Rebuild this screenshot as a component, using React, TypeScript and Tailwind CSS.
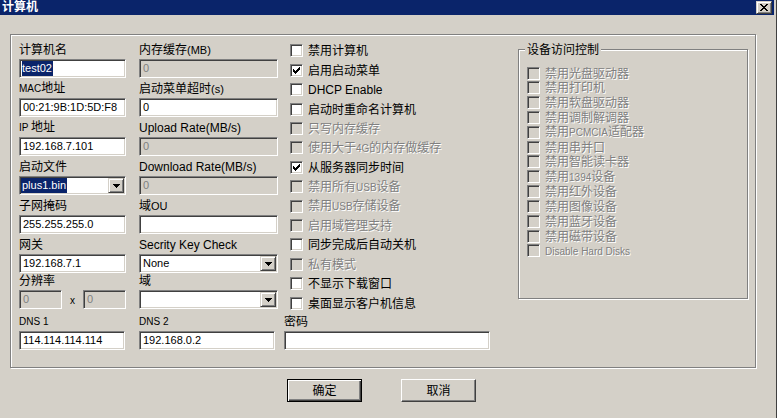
import React from 'react';

// split text so CJK glyphs get 12px and latin gets its own (smaller) font, like the old dialog fonts
const isCjk = (ch: string) => /[\u3000-\u9fff\uff00-\uffef]/.test(ch);

const TAHOMA = 'text-[12px]';
const SMALL = 'text-[10px]';

function T({ text, latin = 'text-[11px]' }: { text: string; latin?: string }) {
  const runs: { cjk: boolean; s: string }[] = [];
  for (const ch of text) {
    const c = isCjk(ch);
    const last = runs[runs.length - 1];
    if (last && last.cjk === c) last.s += ch;
    else runs.push({ cjk: c, s: ch });
  }
  return (
    <>
      {runs.map((r, i) => (
        <span key={i} className={r.cjk ? 'text-[12px]' : latin}>
          {r.s}
        </span>
      ))}
    </>
  );
}

const sunken =
  'border border-t-[#808080] border-l-[#808080] border-b-white border-r-white shadow-[inset_1px_1px_0_#404040,inset_-1px_-1px_0_#d4d0c8]';
const raised =
  'border border-t-[#d4d0c8] border-l-[#d4d0c8] border-b-[#404040] border-r-[#404040] shadow-[inset_1px_1px_0_#fff,inset_-1px_-1px_0_#808080] bg-[#d4d0c8]';
const etched = 'border border-[#808080] shadow-[inset_1px_1px_0_#fff,1px_1px_0_#fff]';
const grayText = 'text-[#808080] [text-shadow:1px_1px_0_#fff]';

function Label({ text, h, latin }: { text: string; h: string; latin?: string }) {
  return (
    <div className={`${h} flex items-end pb-[2px]`}>
      <div className="leading-[14px] whitespace-nowrap text-black">
        <T text={text} latin={latin} />
      </div>
    </div>
  );
}

function Field({
  value = '',
  disabled,
  selected,
  w,
}: {
  value?: string;
  disabled?: boolean;
  selected?: boolean;
  w: string;
}) {
  return (
    <div
      className={`${w} h-[19px] ${sunken} ${disabled ? 'bg-[#d4d0c8] text-[#808080]' : 'bg-white text-black'} flex items-center pl-[2px] overflow-hidden`}
    >
      {selected ? (
        <span className="bg-[#0a246a] text-white text-[11px] leading-[15px] pr-[1px]">{value}</span>
      ) : (
        <span className="text-[11px] leading-[15px] pl-[1px]">{value}</span>
      )}
    </div>
  );
}

function Arrow() {
  return (
    <svg width="7" height="4" viewBox="0 0 7 4" shapeRendering="crispEdges">
      <path d="M0 0h7v1h-1v1h-1v1h-1v1h-1v-1h-1v-1h-1v-1h-1z" fill="#000" />
    </svg>
  );
}

function Combo({ value = '', selected, w }: { value?: string; selected?: boolean; w: string }) {
  return (
    <div className={`${w} h-[19px] ${sunken} bg-white flex items-stretch py-[1px] pr-[1px]`}>
      <div className="flex-1 flex items-center pl-[1px] overflow-hidden">
        {selected ? (
          <span className="bg-[#0a246a] text-white text-[11px] leading-[15px] pl-[1px] pr-[1px]">{value}</span>
        ) : (
          <span className="text-[11px] leading-[15px] pl-[2px] text-black">{value}</span>
        )}
      </div>
      <div className={`w-[16px] ${raised} flex items-center justify-center`}>
        <Arrow />
      </div>
    </div>
  );
}

function Check({ checked, disabled }: { checked?: boolean; disabled?: boolean }) {
  return (
    <div
      className={`w-[13px] h-[13px] shrink-0 ${sunken} ${disabled ? 'bg-[#d4d0c8]' : 'bg-white'} flex items-center justify-center`}
    >
      {checked && (
        <svg width="7" height="7" viewBox="0 0 7 7" shapeRendering="crispEdges">
          <path
            d="M0 2h1v1h1v1h1v-1h1v-1h1v-1h1v-1h1v3h-1v1h-1v1h-1v1h-1v1h-1v-1h-1v-1h-1v-1h-1z"
            fill="#000"
          />
        </svg>
      )}
    </div>
  );
}

function CheckRow({
  text,
  checked,
  disabled,
  h,
  latin,
}: {
  text: string;
  checked?: boolean;
  disabled?: boolean;
  h: string;
  latin?: string;
}) {
  return (
    <div className={`${h} flex items-center gap-[5px]`}>
      <Check checked={checked} disabled={disabled} />
      <div className={`leading-[14px] whitespace-nowrap ${disabled ? grayText : 'text-black'}`}>
        <T text={text} latin={latin} />
      </div>
    </div>
  );
}

const options: { text: string; checked?: boolean; disabled?: boolean; latin?: string }[] = [
  { text: '禁用计算机' },
  { text: '启用启动菜单', checked: true },
  { text: 'DHCP Enable', latin: TAHOMA },
  { text: '启动时重命名计算机' },
  { text: '只写内存缓存', disabled: true },
  { text: '使用大于4G的内存做缓存', disabled: true, latin: SMALL },
  { text: '从服务器同步时间', checked: true },
  { text: '禁用所有USB设备', disabled: true, latin: SMALL },
  { text: '禁用USB存储设备', disabled: true, latin: SMALL },
  { text: '启用域管理支持', disabled: true },
  { text: '同步完成后自动关机' },
  { text: '私有模式', disabled: true },
  { text: '不显示下载窗口' },
  { text: '桌面显示客户机信息' },
];

const devices = [
  '禁用光盘驱动器',
  '禁用打印机',
  '禁用软盘驱动器',
  '禁用调制解调器',
  '禁用PCMCIA适配器',
  '禁用串并口',
  '禁用智能读卡器',
  '禁用1394设备',
  '禁用红外设备',
  '禁用图像设备',
  '禁用蓝牙设备',
  '禁用磁带设备',
  'Disable Hard Disks',
];

export default function App() {
  return (
    <div className="w-[777px] h-[418px] overflow-hidden bg-[#d4d0c8] border-r border-r-[#404040] font-['Liberation_Sans','Noto_Sans_CJK_SC',sans-serif] text-black">
      {/* Title bar */}
      <div className="w-[774px] h-[15px] bg-[#0a246a] flex items-center justify-between pl-[2px] pr-[2px]">
        <span className="text-white font-bold text-[12px] leading-[13px]">计算机</span>
        <div className={`w-[16px] h-[13px] ${raised} flex items-center justify-center`}>
          <svg width="8" height="7" viewBox="0 0 8 7" shapeRendering="crispEdges">
            <path
              d="M0 0h2v1h1v1h2v-1h1v-1h2v1h-1v1h-1v1h-1v1h1v1h1v1h1v1h-2v-1h-1v-1h-2v1h-1v1h-2v-1h1v-1h1v-1h1v-1h-1v-1h-1v-1h-1z"
              fill="#000"
            />
          </svg>
        </div>
      </div>

      {/* Main group */}
      <div className={`ml-[10px] mt-[19px] w-[746px] h-[334px] ${etched} flex items-start pl-[8px] pt-[4px]`}>
        {/* Column 1 */}
        <div className="w-[107px] flex flex-col">
          <Label text="计算机名" h="h-[20px]" />
          <Field value="test02" selected w="w-[107px]" />
          <Label text="MAC地址" h="h-[20px]" latin={SMALL} />
          <Field value="00:21:9B:1D:5D:F8" w="w-[107px]" />
          <Label text="IP 地址" h="h-[20px]" latin={SMALL} />
          <Field value="192.168.7.101" w="w-[107px]" />
          <Label text="启动文件" h="h-[20px]" />
          <Combo value="plus1.bin" selected w="w-[107px]" />
          <Label text="子网掩码" h="h-[20px]" />
          <Field value="255.255.255.0" w="w-[107px]" />
          <Label text="网关" h="h-[20px]" />
          <Field value="192.168.7.1" w="w-[107px]" />
          <Label text="分辨率" h="h-[17px]" />
          <div className="flex items-center">
            <Field value="0" disabled w="w-[43px]" />
            <span className="w-[21px] text-center text-[10px] leading-[14px] pt-[2px]">x</span>
            <Field value="0" disabled w="w-[43px]" />
          </div>
          <Label text="DNS 1" h="h-[22px]" latin={SMALL} />
          <Field value="114.114.114.114" w="w-[106px]" />
        </div>

        {/* Column 2 */}
        <div className="w-[139px] ml-[13px] flex flex-col">
          <Label text="内存缓存(MB)" h="h-[20px]" />
          <Field value="0" disabled w="w-[139px]" />
          <Label text="启动菜单超时(s)" h="h-[20px]" />
          <Field value="0" w="w-[139px]" />
          <Label text="Upload Rate(MB/s)" h="h-[20px]" latin={TAHOMA} />
          <Field value="0" disabled w="w-[139px]" />
          <Label text="Download Rate(MB/s)" h="h-[20px]" latin={TAHOMA} />
          <Field value="0" disabled w="w-[139px]" />
          <Label text="域OU" h="h-[20px]" />
          <Field w="w-[139px]" />
          <Label text="Secrity Key Check" h="h-[20px]" latin={TAHOMA} />
          <Combo value="None" w="w-[139px]" />
          <Label text="域" h="h-[17px]" />
          <Combo w="w-[139px]" />
          <Label text="DNS 2" h="h-[22px]" latin={SMALL} />
          <Field value="192.168.0.2" w="w-[136px]" />
        </div>

        {/* Column 3 */}
        <div className="w-[206px] ml-[6px] mt-[2.3px] flex flex-col">
          <div className="pl-[6px] flex flex-col">
            {options.map((o) => (
              <CheckRow
                key={o.text}
                text={o.text}
                checked={o.checked}
                disabled={o.disabled}
                latin={o.latin}
                h="h-[19.4px]"
              />
            ))}
          </div>
          <Label text="密码" h="h-[18.1px]" />
          <Field w="w-[206px]" />
        </div>

        {/* Device access group */}
        <div className={`relative ml-[28px] mt-[10px] w-[230px] h-[250px] ${etched} pl-[8px] pt-[15.6px]`}>
          <span className="absolute left-[6px] top-[-8px] bg-[#d4d0c8] px-[2px] leading-[14px] whitespace-nowrap">
            <T text="设备访问控制" />
          </span>
          <div className="flex flex-col">
            {devices.map((d) => (
              <CheckRow key={d} text={d} disabled latin={SMALL} h="h-[14.83px]" />
            ))}
          </div>
        </div>
      </div>

      {/* Buttons */}
      <div className="mt-[11px] ml-[287px] flex gap-[39px]">
        <button
          type="button"
          className="w-[75px] h-[23px] border border-black bg-[#d4d0c8] shadow-[inset_1px_1px_0_#fff,inset_-1px_-1px_0_#404040,inset_-2px_-2px_0_#808080] flex items-center justify-center leading-[14px]"
        >
          <T text="确定" />
        </button>
        <button
          type="button"
          className="w-[75px] h-[23px] border border-t-white border-l-white border-b-[#404040] border-r-[#404040] bg-[#d4d0c8] shadow-[inset_-1px_-1px_0_#808080] flex items-center justify-center leading-[14px]"
        >
          <T text="取消" />
        </button>
      </div>
    </div>
  );
}
